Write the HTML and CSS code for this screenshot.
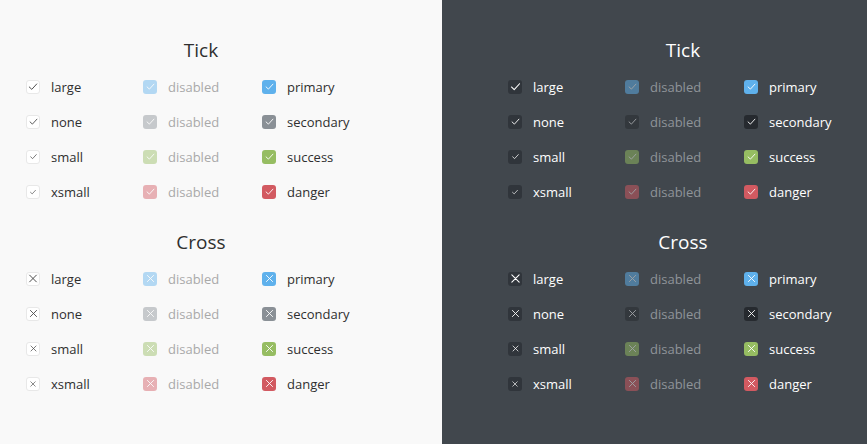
FILE: index.html
```html
<!DOCTYPE html>
<html>
<head>
<meta charset="utf-8">
<link rel="stylesheet" href="styles.css">
</head>
<body>
<svg width="0" height="0" class="defs">
  <defs>
    <symbol id="tick" viewBox="0 0 16 16"><path d="M3 8.6 L6.4 11.8 L13 4.6" fill="none" stroke="currentColor" stroke-width="1.3" stroke-linecap="round" stroke-linejoin="round"/></symbol>
    <symbol id="cross" viewBox="0 0 16 16"><path d="M3.5 3.5 L12.5 12.5 M12.5 3.5 L3.5 12.5" fill="none" stroke="currentColor" stroke-width="1.3" stroke-linecap="round"/></symbol>
  </defs>
</svg>
<div class="page">
  <div class="panel light">
    <section class="sec">
      <h2 class="title">Tick</h2>
      <div class="grid">
        <label class="item"><span class="box def"><svg class="ic lg"><use href="#tick"/></svg></span><span class="txt">large</span></label>
        <label class="item dis"><span class="box primary"><svg class="ic"><use href="#tick"/></svg></span><span class="txt">disabled</span></label>
        <label class="item"><span class="box primary"><svg class="ic"><use href="#tick"/></svg></span><span class="txt">primary</span></label>

        <label class="item"><span class="box def"><svg class="ic md"><use href="#tick"/></svg></span><span class="txt">none</span></label>
        <label class="item dis"><span class="box secondary"><svg class="ic"><use href="#tick"/></svg></span><span class="txt">disabled</span></label>
        <label class="item"><span class="box secondary"><svg class="ic"><use href="#tick"/></svg></span><span class="txt">secondary</span></label>

        <label class="item"><span class="box def"><svg class="ic sm"><use href="#tick"/></svg></span><span class="txt">small</span></label>
        <label class="item dis"><span class="box success"><svg class="ic"><use href="#tick"/></svg></span><span class="txt">disabled</span></label>
        <label class="item"><span class="box success"><svg class="ic"><use href="#tick"/></svg></span><span class="txt">success</span></label>

        <label class="item"><span class="box def"><svg class="ic xs"><use href="#tick"/></svg></span><span class="txt">xsmall</span></label>
        <label class="item dis"><span class="box danger"><svg class="ic"><use href="#tick"/></svg></span><span class="txt">disabled</span></label>
        <label class="item"><span class="box danger"><svg class="ic"><use href="#tick"/></svg></span><span class="txt">danger</span></label>
      </div>
    </section>
    <section class="sec">
      <h2 class="title">Cross</h2>
      <div class="grid">
        <label class="item"><span class="box def"><svg class="ic lg"><use href="#cross"/></svg></span><span class="txt">large</span></label>
        <label class="item dis"><span class="box primary"><svg class="ic"><use href="#cross"/></svg></span><span class="txt">disabled</span></label>
        <label class="item"><span class="box primary"><svg class="ic"><use href="#cross"/></svg></span><span class="txt">primary</span></label>

        <label class="item"><span class="box def"><svg class="ic md"><use href="#cross"/></svg></span><span class="txt">none</span></label>
        <label class="item dis"><span class="box secondary"><svg class="ic"><use href="#cross"/></svg></span><span class="txt">disabled</span></label>
        <label class="item"><span class="box secondary"><svg class="ic"><use href="#cross"/></svg></span><span class="txt">secondary</span></label>

        <label class="item"><span class="box def"><svg class="ic sm"><use href="#cross"/></svg></span><span class="txt">small</span></label>
        <label class="item dis"><span class="box success"><svg class="ic"><use href="#cross"/></svg></span><span class="txt">disabled</span></label>
        <label class="item"><span class="box success"><svg class="ic"><use href="#cross"/></svg></span><span class="txt">success</span></label>

        <label class="item"><span class="box def"><svg class="ic xs"><use href="#cross"/></svg></span><span class="txt">xsmall</span></label>
        <label class="item dis"><span class="box danger"><svg class="ic"><use href="#cross"/></svg></span><span class="txt">disabled</span></label>
        <label class="item"><span class="box danger"><svg class="ic"><use href="#cross"/></svg></span><span class="txt">danger</span></label>
      </div>
    </section>
  </div>
  <div class="panel dark">
    <section class="sec">
      <h2 class="title">Tick</h2>
      <div class="grid">
        <label class="item"><span class="box def"><svg class="ic lg"><use href="#tick"/></svg></span><span class="txt">large</span></label>
        <label class="item dis"><span class="box primary"><svg class="ic"><use href="#tick"/></svg></span><span class="txt">disabled</span></label>
        <label class="item"><span class="box primary"><svg class="ic"><use href="#tick"/></svg></span><span class="txt">primary</span></label>

        <label class="item"><span class="box def"><svg class="ic md"><use href="#tick"/></svg></span><span class="txt">none</span></label>
        <label class="item dis"><span class="box secondary"><svg class="ic"><use href="#tick"/></svg></span><span class="txt">disabled</span></label>
        <label class="item"><span class="box secondary"><svg class="ic"><use href="#tick"/></svg></span><span class="txt">secondary</span></label>

        <label class="item"><span class="box def"><svg class="ic sm"><use href="#tick"/></svg></span><span class="txt">small</span></label>
        <label class="item dis"><span class="box success"><svg class="ic"><use href="#tick"/></svg></span><span class="txt">disabled</span></label>
        <label class="item"><span class="box success"><svg class="ic"><use href="#tick"/></svg></span><span class="txt">success</span></label>

        <label class="item"><span class="box def"><svg class="ic xs"><use href="#tick"/></svg></span><span class="txt">xsmall</span></label>
        <label class="item dis"><span class="box danger"><svg class="ic"><use href="#tick"/></svg></span><span class="txt">disabled</span></label>
        <label class="item"><span class="box danger"><svg class="ic"><use href="#tick"/></svg></span><span class="txt">danger</span></label>
      </div>
    </section>
    <section class="sec">
      <h2 class="title">Cross</h2>
      <div class="grid">
        <label class="item"><span class="box def"><svg class="ic lg"><use href="#cross"/></svg></span><span class="txt">large</span></label>
        <label class="item dis"><span class="box primary"><svg class="ic"><use href="#cross"/></svg></span><span class="txt">disabled</span></label>
        <label class="item"><span class="box primary"><svg class="ic"><use href="#cross"/></svg></span><span class="txt">primary</span></label>

        <label class="item"><span class="box def"><svg class="ic md"><use href="#cross"/></svg></span><span class="txt">none</span></label>
        <label class="item dis"><span class="box secondary"><svg class="ic"><use href="#cross"/></svg></span><span class="txt">disabled</span></label>
        <label class="item"><span class="box secondary"><svg class="ic"><use href="#cross"/></svg></span><span class="txt">secondary</span></label>

        <label class="item"><span class="box def"><svg class="ic sm"><use href="#cross"/></svg></span><span class="txt">small</span></label>
        <label class="item dis"><span class="box success"><svg class="ic"><use href="#cross"/></svg></span><span class="txt">disabled</span></label>
        <label class="item"><span class="box success"><svg class="ic"><use href="#cross"/></svg></span><span class="txt">success</span></label>

        <label class="item"><span class="box def"><svg class="ic xs"><use href="#cross"/></svg></span><span class="txt">xsmall</span></label>
        <label class="item dis"><span class="box danger"><svg class="ic"><use href="#cross"/></svg></span><span class="txt">disabled</span></label>
        <label class="item"><span class="box danger"><svg class="ic"><use href="#cross"/></svg></span><span class="txt">danger</span></label>
      </div>
    </section>
  </div>
</div>
</body>
</html>
```
FILE: styles.css
```css
* { box-sizing: border-box; }
html, body { margin: 0; padding: 0; }
body {
  font-family: "Open Sans", "Noto Sans", sans-serif;
  font-size: 13px;
  width: 867px;
  height: 444px;
  overflow: hidden;
}
.defs { position: absolute; }
.page {
  display: flex;
  height: 444px;
}
.panel {
  height: 100%;
  padding-top: 38px;
}
.light {
  width: 442px;
  background: #f9f9f9;
  color: #2f2f2f;
  padding-left: 26px;
}
.dark {
  flex: 1;
  background: #41474d;
  color: #fff;
  padding-left: 66px;
}
.sec {
  width: 350px;
  margin-bottom: 21px;
}
.title {
  margin: 0 0 7px;
  height: 24px;
  line-height: 24px;
  font-size: 19px;
  font-weight: 400;
  text-align: center;
}
.grid {
  display: grid;
  grid-template-columns: 117px 119px auto;
  grid-auto-rows: 35px;
}
.item {
  display: flex;
  align-items: center;
  gap: 11px;
}
.txt { line-height: 16px; }
.box {
  width: 14px;
  height: 14px;
  border-radius: 3px;
  display: flex;
  align-items: center;
  justify-content: center;
  color: #fff;
  flex: none;
}
.ic { width: 11px; height: 11px; }
.ic.lg { width: 13px; height: 13px; }
.ic.md { width: 11px; height: 11px; }
.ic.sm { width: 9px; height: 9px; }
.ic.xs { width: 8px; height: 8px; }

.light .box.def { background: #fff; border: 1px solid #e8e8e8; color: #4a4a4a; }
.dark .box.def { background: #30353b; color: #fff; }

.box.primary { background: #5fb1ec; }
.light .box.secondary { background: #8a9096; }
.dark .box.secondary { background: #262a2f; }
.box.success { background: #96bd62; }
.box.danger { background: #d25a61; }

.light .dis .box { opacity: 0.45; }
.dark .dis .box { opacity: 0.5; }
.light .dis .txt { color: #a9a9a9; }
.dark .dis .txt { color: #8f9499; }
```
